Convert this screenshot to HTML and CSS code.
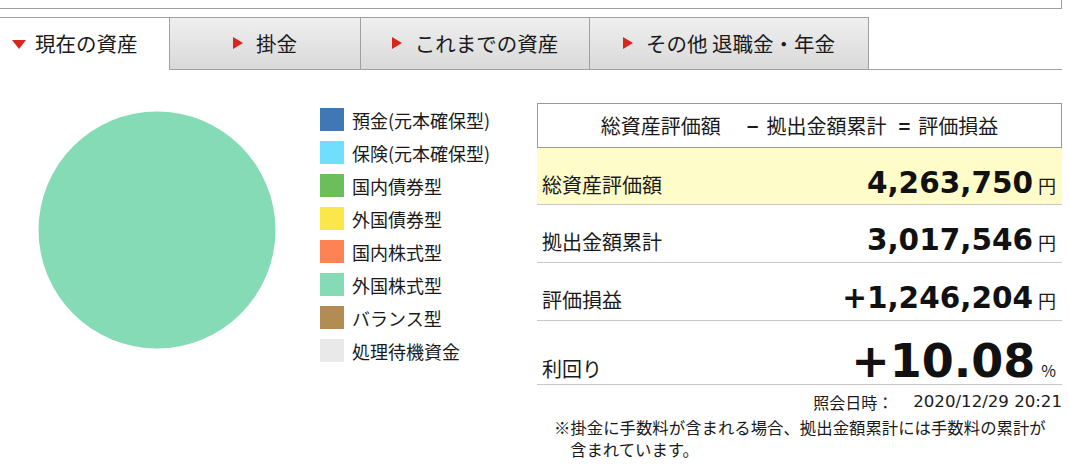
FILE: index.html
```html
<!DOCTYPE html>
<html lang="ja">
<head>
<meta charset="utf-8">
<title>現在の資産</title>
<link rel="stylesheet" href="styles.css">
</head>
<body>
<div class="page">
  <div class="topbox"></div>
  <div class="tabs">
    <div class="tab tab-active"><span class="tri-down"></span>現在の資産</div>
    <div class="tab tab-w2"><span class="tri-right"></span>掛金</div>
    <div class="tab tab-w3"><span class="tri-right"></span>これまでの資産</div>
    <div class="tab tab-w4"><span class="tri-right"></span>その他 退職金・年金</div>
    <div class="tab-fill"></div>
  </div>
  <div class="content">
    <div class="chart">
      <svg class="pie" width="238" height="238" viewBox="0 0 238 238">
        <circle cx="119" cy="119" r="118.5" fill="#85dbb5"/>
      </svg>
    </div>
    <ul class="legend">
      <li><span class="sw sw-blue"></span>預金(元本確保型)</li>
      <li><span class="sw sw-lblue"></span>保険(元本確保型)</li>
      <li><span class="sw sw-green"></span>国内債券型</li>
      <li><span class="sw sw-yellow"></span>外国債券型</li>
      <li><span class="sw sw-orange"></span>国内株式型</li>
      <li><span class="sw sw-teal"></span>外国株式型</li>
      <li><span class="sw sw-brown"></span>バランス型</li>
      <li><span class="sw sw-gray"></span>処理待機資金</li>
    </ul>
    <div class="summary">
      <div class="sum-head">総資産評価額<span class="op op-minus">−</span>拠出金額累計<span class="op op-eq">=</span>評価損益</div>
      <div class="row row-total">
        <span class="label">総資産評価額</span>
        <span class="value"><span class="num">4,263,750</span><span class="unit">円</span></span>
      </div>
      <div class="row">
        <span class="label">拠出金額累計</span>
        <span class="value"><span class="num">3,017,546</span><span class="unit">円</span></span>
      </div>
      <div class="row">
        <span class="label">評価損益</span>
        <span class="value"><span class="num">+1,246,204</span><span class="unit">円</span></span>
      </div>
      <div class="row row-rate">
        <span class="label">利回り</span>
        <span class="value"><span class="num num-big">+10.08</span><span class="unit unit-pct">%</span></span>
      </div>
      <div class="asof"><span class="asof-label">照会日時：</span><span class="asof-time">2020/12/29 20:21</span></div>
      <p class="note">※掛金に手数料が含まれる場合、拠出金額累計には手数料の累計が<br>含まれています。</p>
    </div>
  </div>
</div>
</body>
</html>
```
FILE: styles.css
```css
* { box-sizing: border-box; }
html, body { margin: 0; padding: 0; background: #fff; }
body {
  font-family: "Noto Sans CJK JP", "Noto Sans", sans-serif;
  color: #1a1a1a;
}
.page { width: 1062px; }

.topbox {
  height: 9px;
  border-right: 1px solid #a0a0a0;
  border-bottom: 1px solid #a0a0a0;
}

.tabs {
  display: flex;
  margin-top: 8px;
  height: 53px;
}
.tab {
  display: flex;
  align-items: center;
  justify-content: center;
  font-size: 20.5px;
  line-height: 1;
  border-top: 1px solid #a0a0a0;
  border-bottom: 1px solid #a0a0a0;
  border-right: 1px solid #a0a0a0;
  background: linear-gradient(#efefef, #d9d9d9);
  padding-bottom: 1px;
}
.tab-active {
  width: 169px;
  justify-content: flex-start;
  padding-left: 12px;
  background: #fff;
  border-bottom: none;
  border-right: none;
}
.tab-w2 { width: 192px; border-left: 1px solid #a0a0a0; }
.tab-w3 { width: 229px; }
.tab-w4 { width: 279px; }
.tab-fill {
  flex: 1;
  border-bottom: 1px solid #a0a0a0;
}
.tri-down {
  width: 0; height: 0;
  border-left: 7px solid transparent;
  border-right: 7px solid transparent;
  border-top: 9px solid #d8261c;
  margin-right: 9px;
  margin-top: 2px;
}
.tri-right {
  width: 0; height: 0;
  border-top: 6px solid transparent;
  border-bottom: 6px solid transparent;
  border-left: 10px solid #d8261c;
  margin-right: 13px;
}

.content {
  display: flex;
  align-items: flex-start;
  padding-top: 33px;
}
.chart {
  width: 320px;
  padding-left: 38px;
  padding-top: 8px;
}
.pie { display: block; }

.legend {
  width: 217px;
  list-style: none;
  margin: 0;
  padding: 0;
}
.legend li {
  display: flex;
  align-items: center;
  height: 33px;
  font-size: 18px;
}
.sw {
  width: 24px;
  height: 23px;
  margin-right: 8px;
  flex: none;
}
.sw-blue { background: #3f78b5; }
.sw-lblue { background: #6fdffd; }
.sw-green { background: #6cbd5c; }
.sw-yellow { background: #fbe64c; }
.sw-orange { background: #fd8254; }
.sw-teal { background: #85dbb5; }
.sw-brown { background: #b28c52; }
.sw-gray { background: #e9e9e9; }

.summary { width: 525px; }
.sum-head {
  height: 45px;
  border: 1px solid #999;
  display: flex;
  align-items: center;
  justify-content: center;
  font-size: 20px;
  padding-bottom: 1px;
}
.op { font-weight: bold; }
.op-minus { margin: 0 8px 0 26px; }
.op-eq { margin: 0 8px 0 12px; }

.row {
  height: 57px;
  border-bottom: 1px solid #c8c8c8;
  display: flex;
  justify-content: space-between;
  align-items: baseline;
  padding: 18px 6px 0 5px;
}
.row-total { background: #fefcc8; height: 57px; }
.row + .row { height: 58px; }
.row.row-rate { height: 64px; padding-top: 13px; }
.label { font-size: 20px; }
.value { display: flex; align-items: baseline; }
.num {
  font-family: "DejaVu Sans", sans-serif;
  font-weight: bold;
  font-size: 29.5px;
  color: #111;
}
.num-big { font-size: 46px; }
.unit { font-size: 18px; margin-left: 5px; }
.unit-pct { font-size: 16px; margin-left: 6px; }

.asof {
  display: flex;
  justify-content: flex-end;
  font-size: 16px;
  line-height: 22px;
  margin-top: 6px;
}
.asof-label { margin-right: 20px; }
.asof-time { font-family: "DejaVu Sans", sans-serif; font-size: 16.6px; }
.note {
  margin: 3px 0 0 0;
  font-size: 16.4px;
  line-height: 22px;
  padding-left: 33px;
  text-indent: -16px;
}
```
